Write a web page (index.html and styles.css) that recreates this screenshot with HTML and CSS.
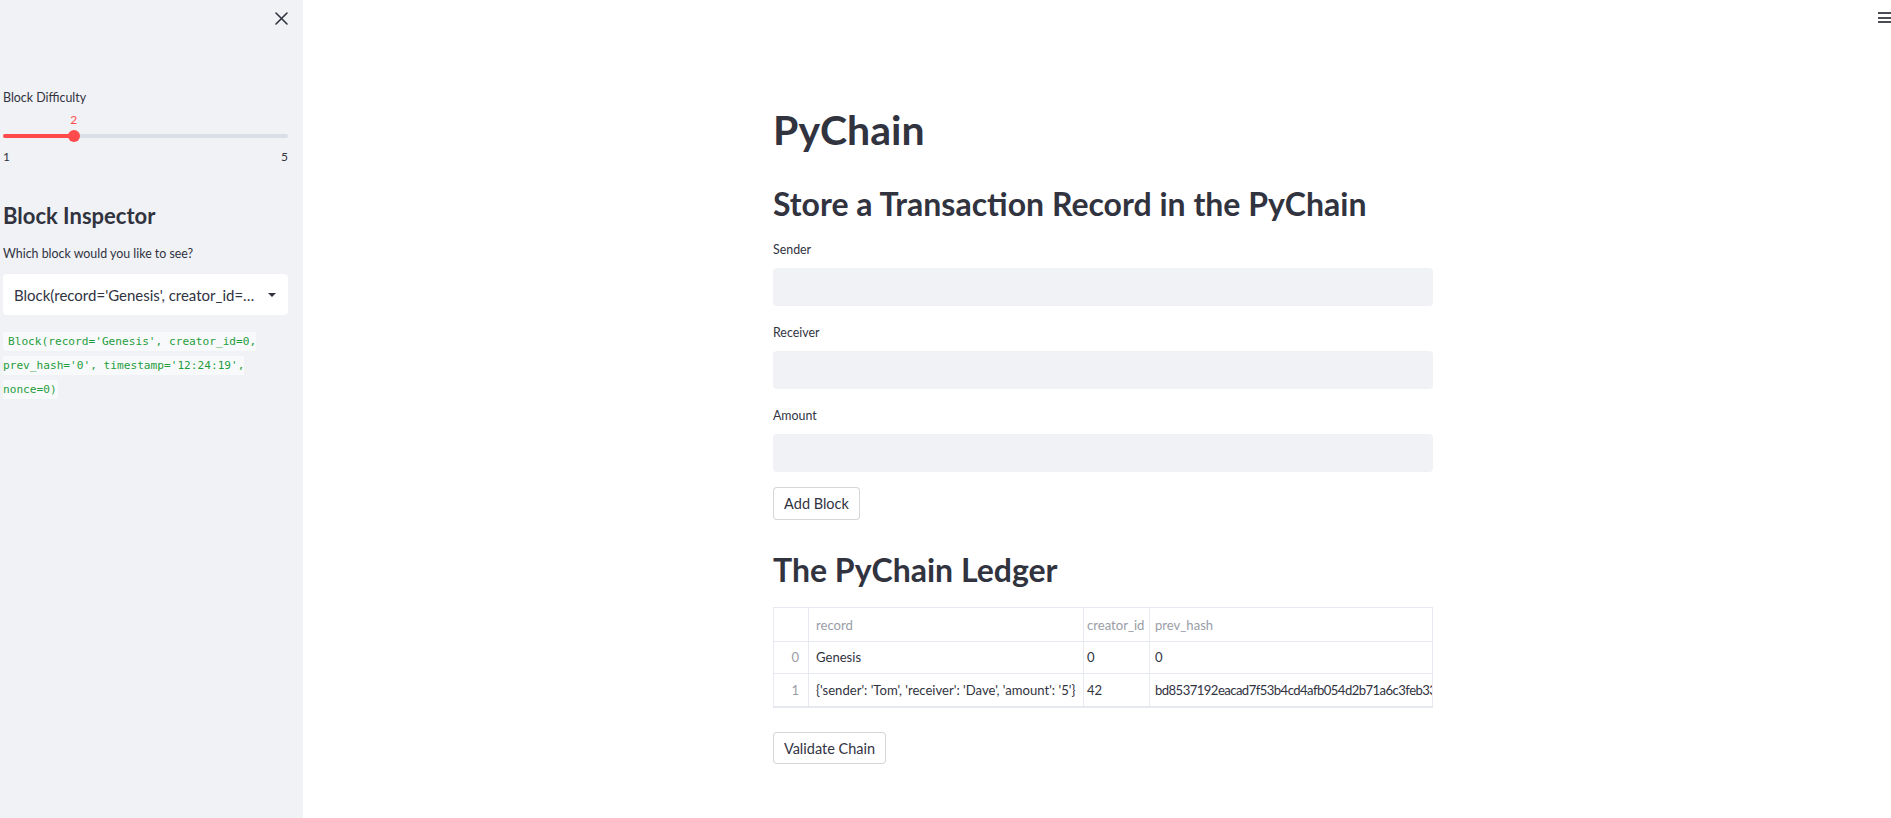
FILE: index.html
```html
<!DOCTYPE html>
<html lang="en">
<head>
<meta charset="utf-8">
<title>PyChain</title>
<link rel="stylesheet" href="styles.css">
</head>
<body>
<div class="app">
  <aside class="sidebar">
    <div class="side-top">
      <button class="close-btn" aria-label="Close sidebar">
        <svg width="13" height="13" viewBox="0 0 13 13"><path d="M1 1 L12 12 M12 1 L1 12" stroke="#31333f" stroke-width="1.6" fill="none" stroke-linecap="round"/></svg>
      </button>
    </div>
    <div class="side-content">
      <div class="slider-label">Block Difficulty</div>
      <div class="slider">
        <div class="slider-value-row">
          <span class="slider-value" style="width: 25%">2</span>
        </div>
        <div class="track">
          <div class="fill" style="width: 25%"><span class="thumb"></span></div>
        </div>
        <div class="ticks"><span>1</span><span>5</span></div>
      </div>
      <h3 class="side-heading">Block Inspector</h3>
      <div class="side-label">Which block would you like to see?</div>
      <div class="select">
        <span class="select-text">Block(record='Genesis', creator_id=…</span>
        <svg class="caret" width="8" height="4" viewBox="0 0 8 4"><path d="M0 0 L8 0 L4 4 Z" fill="#31333f"/></svg>
      </div>
      <p class="code-para"><code class="code">Block(record='Genesis', creator_id=0, prev_hash='0', timestamp='12:24:19', nonce=0)</code></p>
    </div>
  </aside>
  <main class="main">
    <header class="topbar">
      <span class="menu-icon"><i></i><i></i><i></i></span>
    </header>
    <div class="block">
      <h1 class="title">PyChain</h1>
      <h2 class="h2 h2-first">Store a Transaction Record in the PyChain</h2>
      <div class="field">
        <label class="field-label">Sender</label>
        <div class="input"></div>
      </div>
      <div class="field">
        <label class="field-label">Receiver</label>
        <div class="input"></div>
      </div>
      <div class="field">
        <label class="field-label">Amount</label>
        <div class="input"></div>
      </div>
      <button class="btn btn-add">Add Block</button>
      <h2 class="h2 h2-ledger">The PyChain Ledger</h2>
      <div class="table-wrap">
        <table class="df">
          <colgroup>
            <col class="c-idx"><col class="c-rec"><col class="c-cre"><col class="c-prev">
          </colgroup>
          <thead>
            <tr><th class="idx"></th><th class="rec">record</th><th class="cre">creator_id</th><th class="prev">prev_hash</th></tr>
          </thead>
          <tbody>
            <tr class="r0"><td class="idx">0</td><td class="rec">Genesis</td><td class="cre">0</td><td class="prev">0</td></tr>
            <tr class="r1"><td class="idx">1</td><td class="rec">{'sender': 'Tom', 'receiver': 'Dave', 'amount': '5'}</td><td class="cre">42</td><td class="prev hash">bd8537192eacad7f53b4cd4afb054d2b71a6c3feb33</td></tr>
          </tbody>
        </table>
      </div>
      <button class="btn btn-validate">Validate Chain</button>
    </div>
  </main>
</div>
</body>
</html>
```

FILE: styles.css
```css
* { box-sizing: border-box; }
html, body { margin: 0; padding: 0; }
body {
  font-family: Lato, "Noto Sans", sans-serif;
  color: #31333f;
  background: #ffffff;
  width: 1891px;
  height: 818px;
  overflow: hidden;
}
.app {
  display: flex;
  height: 818px;
}
.sidebar {
  width: 303px;
  flex: 0 0 303px;
  background: #f0f2f6;
  height: 100%;
  display: flex;
  flex-direction: column;
}
.side-top {
  height: 36px;
  display: flex;
  justify-content: flex-end;
  align-items: center;
  padding-right: 15px;
}
.close-btn {
  border: 0;
  background: transparent;
  padding: 0;
  width: 14px;
  height: 14px;
  display: flex;
  align-items: center;
  justify-content: center;
}
.side-content {
  padding: 54px 15px 0 3px;
}
.slider-label {
  font-size: 12.4px;
  line-height: 16px;
  height: 16px;
}
.slider {
  margin-top: 6px;
}
.slider-value-row {
  display: flex;
  height: 16px;
}
.slider-value {
  display: block;
  text-align: right;
  font-size: 12px;
  line-height: 16px;
  color: #ff4b4b;
  position: relative;
  left: 3px;
}
.track {
  margin-top: 6px;
  height: 4px;
  border-radius: 2px;
  background: #dadee6;
}
.fill {
  position: relative;
  height: 4px;
  border-radius: 2px;
  background: #ff4b4b;
}
.thumb {
  position: absolute;
  right: -6px;
  top: -4px;
  width: 12px;
  height: 12px;
  border-radius: 50%;
  background: #ff4b4b;
}
.ticks {
  display: flex;
  justify-content: space-between;
  font-size: 12px;
  line-height: 16px;
  margin-top: 11px;
}
.side-heading {
  margin: 37px 0 0;
  font-size: 22px;
  font-weight: 700;
  line-height: 28px;
  color: #31333f;
}
.side-label {
  margin-top: 16px;
  font-size: 12.4px;
  line-height: 16px;
}
.select {
  margin-top: 12px;
  height: 41px;
  background: #ffffff;
  border-radius: 4px;
  display: flex;
  align-items: center;
  justify-content: space-between;
  padding: 0 12px 0 11px;
}
.select-text {
  font-size: 15px;
  white-space: nowrap;
}
.caret { margin-top: 1px; }
.code-para {
  margin: 15px 0 0;
  font-family: "DejaVu Sans Mono", "Liberation Mono", monospace;
  line-height: 24px;
  font-size: 11.15px;
}
.code {
  font-family: "DejaVu Sans Mono", "Liberation Mono", monospace;
  font-size: 11.15px;
  line-height: 24px;
  color: #1f9e3c;
  background: #f8f9fb;
  padding: 3px 1px 3px 5px;
  border-radius: 3px;
  -webkit-box-decoration-break: slice;
  box-decoration-break: slice;
}

.main {
  flex: 1;
  position: relative;
  padding-left: 12px;
}
.topbar {
  position: absolute;
  top: 0;
  right: 0;
  height: 36px;
  width: 40px;
}
.menu-icon {
  position: absolute;
  top: 12px;
  right: -4px;
  width: 17px;
  display: flex;
  flex-direction: column;
  gap: 2.5px;
}
.menu-icon i {
  display: block;
  height: 2px;
  background: #4a4c55;
}
.block {
  width: 660px;
  margin: 0 auto;
  padding-top: 103px;
}
.title {
  margin: 0;
  font-size: 41px;
  font-weight: 700;
  line-height: 53px;
  height: 53px;
}
.h2 {
  margin: 0;
  font-size: 32px;
  font-weight: 700;
  line-height: 38px;
  height: 38px;
}
.h2-first { margin-top: 29px; }
.field { margin-top: 19px; }
.field-label {
  display: block;
  font-size: 12.4px;
  line-height: 16px;
  height: 16px;
}
.input {
  margin-top: 10px;
  height: 38px;
  background: #f0f2f6;
  border-radius: 4px;
}
.btn {
  display: block;
  font-family: Lato, "Noto Sans", sans-serif;
  background: #ffffff;
  color: #31333f;
  border: 1px solid rgba(49, 51, 63, 0.2);
  border-radius: 4px;
  font-size: 14.5px;
  padding: 0;
  white-space: nowrap;
  text-align: center;
}
.btn-add {
  margin-top: 15px;
  height: 33px;
  width: 87px;
}
.h2-ledger { margin-top: 31px; }
.table-wrap {
  margin-top: 18px;
  width: 660px;
  overflow: hidden;
  border: 1px solid #e6e9ef;
}
.df {
  border-collapse: collapse;
  table-layout: fixed;
  width: 800px;
  font-size: 13.1px;
  margin: -1px 0 0 -1px;
}
.c-idx { width: 35px; }
.c-rec { width: 275px; }
.c-cre { width: 66px; }
.c-prev { width: 424px; }
.df th, .df td {
  border: 1px solid #e6e9ef;
  white-space: nowrap;
  overflow: hidden;
  text-align: left;
  font-weight: 400;
  padding: 0 5px;
}
.df thead tr { height: 34px; }
.df .r0 { height: 32px; }
.df .r1 { height: 33px; }
.df td { padding-bottom: 1px; }
.df th { color: #9a9da6; }
.df td.idx { color: #9a9da6; text-align: right; padding-right: 9px; }
.df .rec { padding-left: 7px; }
.df .cre { padding-left: 3px; }
.df .prev { padding-left: 5px; }
.df .hash { letter-spacing: -0.55px; }
.btn-validate {
  margin-top: 24px;
  height: 32px;
  width: 113px;
}
```
